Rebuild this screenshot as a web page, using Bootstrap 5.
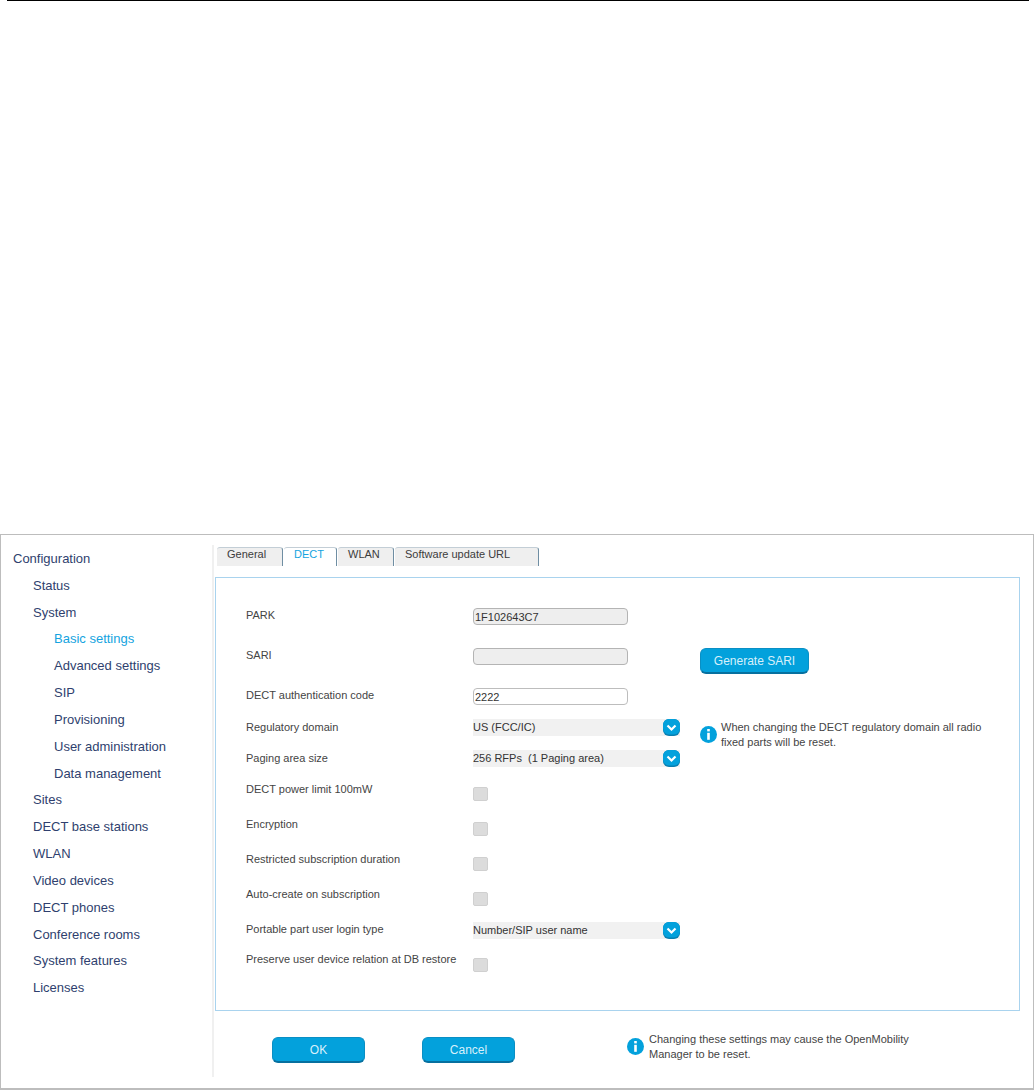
<!DOCTYPE html>
<html lang="en">
<head>
<meta charset="utf-8">
<title>DECT settings</title>
<link href="https://cdn.jsdelivr.net/npm/bootstrap@5.3.0/dist/css/bootstrap.min.css" rel="stylesheet">
<style>
html,body{background:#fff;margin:0;}
body{font-family:"Liberation Sans",Arial,sans-serif;height:1090px;overflow:hidden;}
.top-rule{height:1px;background:#000;margin:0 7px 533px 7px;}
.frame{height:556px;border:1px solid #bdbdbd;border-bottom-width:2px;margin-right:2px;}
.side{width:211px;padding-top:10px;flex:none;}
.side-sep{width:2px;background:#f0f0f0;margin-top:10px;height:532px;flex:none;}
.side-link{display:block;height:26.84px;line-height:27px;font-size:13px;color:#2f3f6e;text-decoration:none;padding-left:12px;}
.side-link.lvl1{padding-left:32px;}
.side-link.lvl2{padding-left:53px;}
.side-link.active-item{color:#14a3e0;}
.work{flex:1;min-width:0;padding-left:1px;}
.tabs-strip{padding:12px 0 0 2px;height:42px;gap:1px;flex-wrap:nowrap;border:0;}
.tab-item{height:19px;line-height:12px;font-size:11px;color:#3c3c3c;background:#efefef;border:0;border-top:1px solid #c3ced6;border-right:1px solid #6f8ea3;border-top-left-radius:3px;border-top-right-radius:3px;padding:0 0 0 10px;text-decoration:none;display:block;}
.tab-item.current{background:#fff;color:#14a3e0;}
.t1{width:66px;}.t2{width:53px;}.t3{width:56px;}.t4{width:144px;}
.panel-box{width:805px;height:434px;border:1px solid #a9d3ee;padding:30px 0 0 30px;}
.frow{display:flex;align-items:flex-start;}
.h40{height:40px;}.h31{height:31px;}.h35{height:35px;}.h36{height:36px;}.h29{height:29px;}
.flabel{width:227px;flex:none;font-size:11px;line-height:16px;color:#444;margin:0;}
.lift{margin-top:-1px;}
.fctl{position:relative;flex:none;width:207px;}
.txt{display:block;width:155px;height:17px;padding:0 1px;font-size:11px;line-height:14px;color:#333;font-family:inherit;background:#fff;border:1px solid #bdbdbd;border-radius:4px;box-shadow:none;}
.txt:disabled{background:#eee;border-color:#b4b4b4;}
.sel{width:207px;height:17px;padding:0 22px 0 0;font-size:11px;line-height:17px;color:#333;background:#f1f1f1;border:0;border-radius:0;box-shadow:none;font-family:inherit;appearance:none;-webkit-appearance:none;display:block;opacity:1;}
.sel-ico{position:absolute;right:0;top:0;width:17px;height:17px;}
.form-check-input.chk{display:block;width:15px;height:14px;margin:6px 0 0 0;background:#dcdcdc;border:1px solid #d0d0d0;border-radius:2px;opacity:1;float:none;}
.form-check-input.chk2{margin-top:7px;}
.blue-btn{background:#03a1dc;color:#d8f0fb;border:1px solid #0a8fc4;border-bottom:2px solid #07709f;border-radius:6px;font-size:12px;line-height:14px;padding:0;font-family:inherit;width:93px;height:26px;}
.blue-btn:hover{background:#03a1dc;color:#d8f0fb;}
.gen{width:109px;margin-left:20px;}
.note{font-size:11px;line-height:14.5px;color:#444;}
.note svg{flex:none;width:17px;height:17px;}
.n1{margin-left:20px;width:290px;gap:4px;margin-top:1px;}
.n1 svg{margin-top:6px;}
.foot{height:77px;padding:26px 0 0 57px;}
.gap1{margin-left:57px;}
.n2{margin-left:112px;width:300px;gap:5px;margin-top:-5px;}
.n2 svg{margin-top:6px;}
</style>
</head>
<body>
<div class="top-rule"></div>
<div class="frame d-flex">
  <nav class="side">
    <a class="side-link" href="#">Configuration</a>
    <a class="side-link lvl1" href="#">Status</a>
    <a class="side-link lvl1" href="#">System</a>
    <a class="side-link lvl2 active-item" href="#">Basic settings</a>
    <a class="side-link lvl2" href="#">Advanced settings</a>
    <a class="side-link lvl2" href="#">SIP</a>
    <a class="side-link lvl2" href="#">Provisioning</a>
    <a class="side-link lvl2" href="#">User administration</a>
    <a class="side-link lvl2" href="#">Data management</a>
    <a class="side-link lvl1" href="#">Sites</a>
    <a class="side-link lvl1" href="#">DECT base stations</a>
    <a class="side-link lvl1" href="#">WLAN</a>
    <a class="side-link lvl1" href="#">Video devices</a>
    <a class="side-link lvl1" href="#">DECT phones</a>
    <a class="side-link lvl1" href="#">Conference rooms</a>
    <a class="side-link lvl1" href="#">System features</a>
    <a class="side-link lvl1" href="#">Licenses</a>
  </nav>
  <div class="side-sep"></div>
  <div class="work">
    <ul class="nav tabs-strip d-flex">
      <li class="nav-item"><a class="tab-item t1" href="#">General</a></li>
      <li class="nav-item"><a class="tab-item t2 current" href="#">DECT</a></li>
      <li class="nav-item"><a class="tab-item t3" href="#">WLAN</a></li>
      <li class="nav-item"><a class="tab-item t4" href="#">Software update URL</a></li>
    </ul>
    <form class="panel-box">
      <div class="frow h40"><label class="flabel lift">PARK</label><div class="fctl"><input class="txt" value="1F102643C7" disabled></div></div>
      <div class="frow h40"><label class="flabel lift">SARI</label><div class="fctl"><input class="txt" disabled></div><button type="button" class="btn blue-btn gen">Generate SARI</button></div>
      <div class="frow h31"><label class="flabel lift">DECT authentication code</label><div class="fctl"><input class="txt" value="2222"></div></div>
      <div class="frow h31"><label class="flabel">Regulatory domain</label><div class="fctl"><select class="sel"><option>US (FCC/IC)</option></select><svg class="sel-ico" viewBox="0 0 17 17"><use href="#chev"/></svg></div>
        <div class="note n1 d-flex"><svg viewBox="0 0 17 17"><use href="#info"/></svg><div>When changing the DECT regulatory domain all radio fixed parts will be reset.</div></div></div>
      <div class="frow h31"><label class="flabel">Paging area size</label><div class="fctl"><select class="sel"><option>256 RFPs&nbsp; (1 Paging area)</option></select><svg class="sel-ico" viewBox="0 0 17 17"><use href="#chev"/></svg></div></div>
      <div class="frow h35"><label class="flabel">DECT power limit 100mW</label><input type="checkbox" class="form-check-input chk" disabled></div>
      <div class="frow h35"><label class="flabel">Encryption</label><input type="checkbox" class="form-check-input chk" disabled></div>
      <div class="frow h35"><label class="flabel">Restricted subscription duration</label><input type="checkbox" class="form-check-input chk" disabled></div>
      <div class="frow h36"><label class="flabel">Auto-create on subscription</label><input type="checkbox" class="form-check-input chk" disabled></div>
      <div class="frow h29"><label class="flabel lift">Portable part user login type</label><div class="fctl"><select class="sel"><option>Number/SIP user name</option></select><svg class="sel-ico" viewBox="0 0 17 17"><use href="#chev"/></svg></div></div>
      <div class="frow"><label class="flabel">Preserve user device relation at DB restore</label><input type="checkbox" class="form-check-input chk chk2" disabled></div>
    </form>
    <div class="foot d-flex align-items-start">
      <button type="button" class="btn blue-btn">OK</button>
      <button type="button" class="btn blue-btn gap1">Cancel</button>
      <div class="note n2 d-flex"><svg viewBox="0 0 17 17"><use href="#info"/></svg><div>Changing these settings may cause the OpenMobility Manager to be reset.</div></div>
    </div>
  </div>
</div>
<svg width="0" height="0" class="d-none">
  <symbol id="chev" viewBox="0 0 17 17"><rect x="0" y="0" width="17" height="17" rx="6" fill="#0a7fb0"/><rect x="0" y="0" width="17" height="15.5" rx="6" fill="#03a1dc"/><path d="M4.5 6.5 8.5 10.5 12.5 6.5" fill="none" stroke="#fff" stroke-width="2.2"/></symbol>
  <symbol id="info" viewBox="0 0 17 17"><circle cx="8.5" cy="8.5" r="8.5" fill="#03a1dc"/><rect x="7.2" y="3" width="2.6" height="2.4" fill="#fff"/><rect x="7.2" y="6.8" width="2.6" height="7" fill="#fff"/></symbol>
</svg>
<script src="https://cdn.jsdelivr.net/npm/bootstrap@5.3.0/dist/js/bootstrap.bundle.min.js"></script>
</body>
</html>
